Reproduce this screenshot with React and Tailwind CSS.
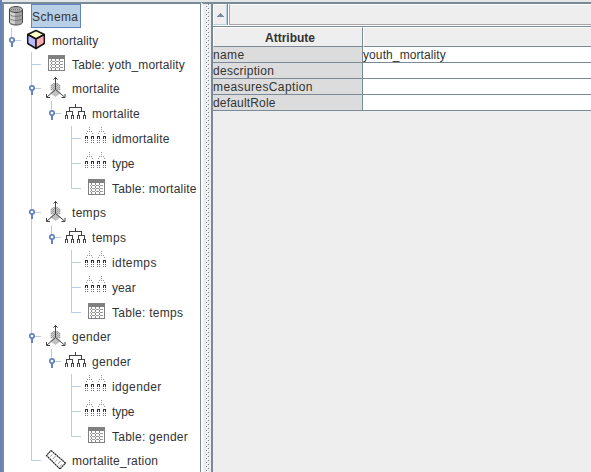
import React from "react";

const nodes = [
  { d: 0, icon: "db", label: "Schema", h: "h-6", selected: true, track: "tracking-[0.4px]" },
  { d: 1, icon: "cube", label: "mortality", h: "h-6", guides: "K", track: "tracking-[0.12px]" },
  { d: 2, icon: "table", label: "Table: yoth_mortality", h: "h-6", guides: " T", track: "tracking-[0.13px]" },
  { d: 2, icon: "dim", label: "mortalite", h: "h-[25px]", guides: " H", track: "tracking-[0.22px]" },
  { d: 3, icon: "hier", label: "mortalite", h: "h-[25px]", guides: " IK", track: "tracking-[0.22px]" },
  { d: 4, icon: "level", label: "idmortalite", h: "h-[25px]", guides: " I T", track: "tracking-[0.2px]" },
  { d: 4, icon: "level", label: "type", h: "h-[25px]", guides: " I T", track: "tracking-[-0.1px]" },
  { d: 4, icon: "table", label: "Table: mortalite", h: "h-6", guides: " I L", track: "tracking-[0.21px]" },
  { d: 2, icon: "dim", label: "temps", h: "h-[25px]", guides: " H", track: "tracking-[0.3px]" },
  { d: 3, icon: "hier", label: "temps", h: "h-[25px]", guides: " IK", track: "tracking-[0.3px]" },
  { d: 4, icon: "level", label: "idtemps", h: "h-[25px]", guides: " I T", track: "tracking-[0.4px]" },
  { d: 4, icon: "level", label: "year", h: "h-[25px]", guides: " I T", track: "tracking-[0.1px]" },
  { d: 4, icon: "table", label: "Table: temps", h: "h-6", guides: " I L", track: "tracking-[0.27px]" },
  { d: 2, icon: "dim", label: "gender", h: "h-[25px]", guides: " H", track: "tracking-[0.3px]" },
  { d: 3, icon: "hier", label: "gender", h: "h-[25px]", guides: " IK", track: "tracking-[0.3px]" },
  { d: 4, icon: "level", label: "idgender", h: "h-[25px]", guides: " I T", track: "tracking-[0.36px]" },
  { d: 4, icon: "level", label: "type", h: "h-[25px]", guides: " I T", track: "tracking-[-0.1px]" },
  { d: 4, icon: "table", label: "Table: gender", h: "h-6", guides: " I L", track: "tracking-[0.25px]" },
  { d: 2, icon: "ruler", label: "mortalite_ration", h: "h-6", guides: " L", track: "tracking-[0.22px]" },
];

// I: pass-through, T: branch, L: last branch, H: branch with handle, K: last branch with handle
function Guide({ kind }) {
  const last = kind === "L" || kind === "K";
  const handle = kind === "H" || kind === "K";
  return (
    <svg className="h-full w-5 shrink-0" viewBox="0 0 20 25" preserveAspectRatio="xMidYMin slice" shapeRendering="crispEdges">
      {kind !== " " && <rect x="7" y="0" width="1" height={last ? 13 : 25} fill="#b8cfe5" />}
      {kind !== " " && kind !== "I" && <rect x="7" y="12" width="10" height="1" fill="#b8cfe5" />}
      {handle && (
        <g shapeRendering="auto">
          <rect x="7" y="14" width="2" height="5" fill="#6382bf" />
          <circle cx="8" cy="12" r="2.2" fill="#fff" stroke="#6382bf" strokeWidth="1.7" />
        </g>
      )}
    </svg>
  );
}

function pixels(rows, fill) {
  return rows.map(([x, y, w = 1, h = 1], i) => <rect key={i} x={x} y={y} width={w} height={h} fill={fill} />);
}

function Icon({ type }) {
  let art = null;
  if (type === "db")
    art = (
      <g>
        <path d="M5.500 5.500v12.500c0 2 3 3 6.500 3s6.500-1 6.500-3v-12.500z" fill="#a2a2a2" stroke="#444" />
        <path d="M6 7v11c1 1.300 2 1.800 5 2V9z" fill="#d2d2d2" />
        <ellipse cx="12" cy="5.500" rx="6.500" ry="3" fill="#b4b4b4" stroke="#444" />
        <path d="M7 5.500h10M8.500 4h7M8.500 7h7" stroke="#777" strokeDasharray="1 1" />
        <path d="M6 10.500c1 2.500 11 2.500 12 0M6 14.500c1 2.500 11 2.500 12 0" fill="none" stroke="#6b6b6b" strokeWidth=".8" />
      </g>
    );
  if (type === "cube")
    art = (
      <g stroke="#151515" strokeWidth="1.500" strokeLinejoin="round">
        <path d="M12 2.500l8.300 4-8.300 4.500-8.300-4.500z" fill="#ffffc8" />
        <path d="M3.700 6.500l8.300 4.500V20.500l-8.300-5z" fill="#b9bbfa" />
        <path d="M20.300 6.500l-8.300 4.500V20.500l8.300-5z" fill="#ffaeb0" />
      </g>
    );
  if (type === "table")
    art = (
      <g shapeRendering="crispEdges">
        <rect x="4" y="3" width="17" height="16" fill="#808080" />
        <rect x="5" y="7" width="15" height="11" fill="#fff" />
        {[9, 12, 15].map((y) => (
          <g key={y}>
            {pixels([[6, y], [8, y, 3], [12, y, 3], [16, y, 3]], "#999")}
            {pixels([[7, y - 2, 1, 2], [11, y - 2, 1, 2], [15, y - 2, 1, 2]], "#888")}
          </g>
        ))}
        {pixels([[7, 16, 1, 2], [11, 16, 1, 2], [15, 16, 1, 2]], "#888")}
      </g>
    );
  if (type === "dim")
    art = (
      <g>
        <path d="M11.500 6l5 3v5l-5 2-5-2V9z" fill="#ccc" />
        <path d="M9 7.500h6M7 9.500h10M7 11.500h10M7 13.500h10" stroke="#999" strokeDasharray="1 1" />
        <path d="M8 8.500h8M8 10.500h8M8 12.500h8" stroke="#aaa" strokeDasharray="1 1" />
        <path d="M11.500 13l5.500 4-5.500 4-5.500-4z" fill="#c0c0c0" />
        <path d="M11.500 1v12.500L3 21M11.500 13.500L20.500 21M9.500 3.500L11.500 1.500 13.500 3.500M2.500 18v3.500H6M21 18v3.500H17.500" fill="none" stroke="#444" />
      </g>
    );
  if (type === "hier")
    art = (
      <path d="M11.500 3v3M5.500 10V6.500h12V10M2.500 14v-3.500h6V14M14.500 14v-3.500h6V14M1.500 18v-3.500h2V18M7.500 18v-3.500h2V18M13.500 18v-3.500h2V18M19.500 18v-3.500h2V18" fill="none" stroke="#444" shapeRendering="crispEdges" />
    );
  if (type === "level")
    art = (
      <g shapeRendering="crispEdges">
        {[0, 12].map((x) => (
          <g key={x} transform={`translate(${x} 0)`}>
            {pixels([[5, 1], [5, 3], [3, 5], [5, 5], [7, 5], [2, 7], [8, 7]], "#999")}
            {[1, 7].map((a) => (
              <g key={a}>
                {pixels([[a, 10, 3, 1], [a, 11, 1, 2], [a + 2, 11, 1, 2]], "#333")}
                {pixels([[a, 14], [a + 2, 14], [a, 16], [a + 2, 16]], "#777")}
              </g>
            ))}
          </g>
        ))}
      </g>
    );
  if (type === "ruler")
    art = (
      <g>
        <path d="M7 2.500L21.500 15l-5.500 6L2.500 7.500z" fill="#fff" stroke="#222" strokeWidth="1.200" strokeDasharray="2 .5" />
        <path d="M6.500 8.500l1.500-2M9 11l2.500-3M11.500 13.500l1.500-2M14 16l2.500-3M16 18.500l1.500-2" stroke="#999" />
      </g>
    );
  return <svg className="h-6 w-7 shrink-0" viewBox="0 0 28 24">{art}</svg>;
}

function Row({ node }) {
  return (
    <div className={`flex shrink-0 items-start ${node.h}`}>
      {(node.guides || "").padEnd(node.d).split("").map((kind, i) => <Guide key={i} kind={kind} />)}
      <Icon type={node.icon} />
      {node.selected ? (
        <span className={`-ml-px h-6 w-[50px] border border-[#6382bf] bg-[#b8cfe5] leading-[25px] ${node.track}`}>{node.label}</span>
      ) : (
        <span className={`h-6 leading-[27px] whitespace-nowrap ${node.track}`}>{node.label}</span>
      )}
    </div>
  );
}

const attributes = [
  ["name", "youth_mortality", "tracking-[0.35px]"],
  ["description", "", "tracking-[0.28px]"],
  ["measuresCaption", "", "tracking-[0.39px]"],
  ["defaultRole", "", "tracking-[0.17px]"],
];

export default function App() {
  return (
    <div className="flex h-[472px] w-[591px] flex-col overflow-hidden bg-[#eee] font-['Liberation_Sans',Arial,sans-serif] text-xs text-[#333]">
      <div className="flex min-h-0 flex-1">
        <div className="w-0.5 shrink-0 bg-[#6382bf]" />
        <div className="flex min-w-0 flex-1 flex-col">
          <div className="h-0.5 shrink-0 bg-[#e4e7e8]" />
          <div className="flex min-h-0 flex-1">
            <div className="flex w-[199px] shrink-0 flex-col overflow-hidden border-t-2 border-r border-l-2 border-[#7a8a99] bg-white">
              {nodes.map((node, i) => <Row key={i} node={node} />)}
            </div>
            <div className="flex w-[10px] shrink-0 border-t-2 border-l-2 border-t-[#7a8a99] border-l-white bg-[#eee]">
              <svg className="h-full w-2" shapeRendering="crispEdges">
                <defs>
                  <pattern id="grip" width="8" height="4" patternUnits="userSpaceOnUse">
                    <rect x="3" y="2" width="1" height="1" fill="#7a8a99" />
                    <rect x="5" y="0" width="1" height="1" fill="#7a8a99" />
                    <rect x="4" y="3" width="1" height="1" fill="#fff" />
                    <rect x="6" y="1" width="1" height="1" fill="#fff" />
                  </pattern>
                </defs>
                <rect width="8" height="470" fill="url(#grip)" />
              </svg>
            </div>
            <div className="flex min-w-0 flex-1 flex-col border-t-2 border-l-2 border-[#7a8a99]">
              <div className="flex h-[22px] shrink-0 border-b border-white">
                <div className="flex w-[15px] shrink-0 border-r border-[#7a8a99]">
                  <div className="flex flex-1 items-center justify-center border-t border-r border-b border-l border-t-white border-r-[#b8cfe5] border-b-[#b8cfe5] border-l-white bg-[#eee]">
                    <svg className="h-1 w-[7px]" viewBox="0 0 7 4" shapeRendering="crispEdges">
                      <path d="M3 0h1v1h1v1h1v1h1v1H0V3h1V2h1V1h1z" fill="#7a8a99" />
                    </svg>
                  </div>
                </div>
                <div className="flex flex-1 border-l border-white">
                  <div className="flex-1 border-t border-b border-l border-t-white border-b-[#a9a4ab] border-l-[#a9a4ab] bg-[#eee]" />
                </div>
              </div>
              <div className="grid shrink-0 grid-cols-[150px_1fr] border-t border-[#7a8a99]">
                <div className="h-5 border-t border-r border-b border-l border-t-white border-r-[#7a8a99] border-b-[#7a8a99] border-l-white pl-1 text-center leading-[20px] font-bold">Attribute</div>
                <div className="h-5 border-t border-b border-l border-t-white border-b-[#7a8a99] border-l-white" />
                {attributes.map(([name, value, track]) => (
                  <React.Fragment key={name}>
                    <div className={`h-4 border-r border-b border-[#7a8a99] bg-[#dcdcdc] leading-4 ${track}`}>{name}</div>
                    <div className="h-4 border-b border-[#7a8a99] bg-white leading-4 tracking-[0.1px]">{value}</div>
                  </React.Fragment>
                ))}
              </div>
            </div>
          </div>
        </div>
      </div>
    </div>
  );
}
